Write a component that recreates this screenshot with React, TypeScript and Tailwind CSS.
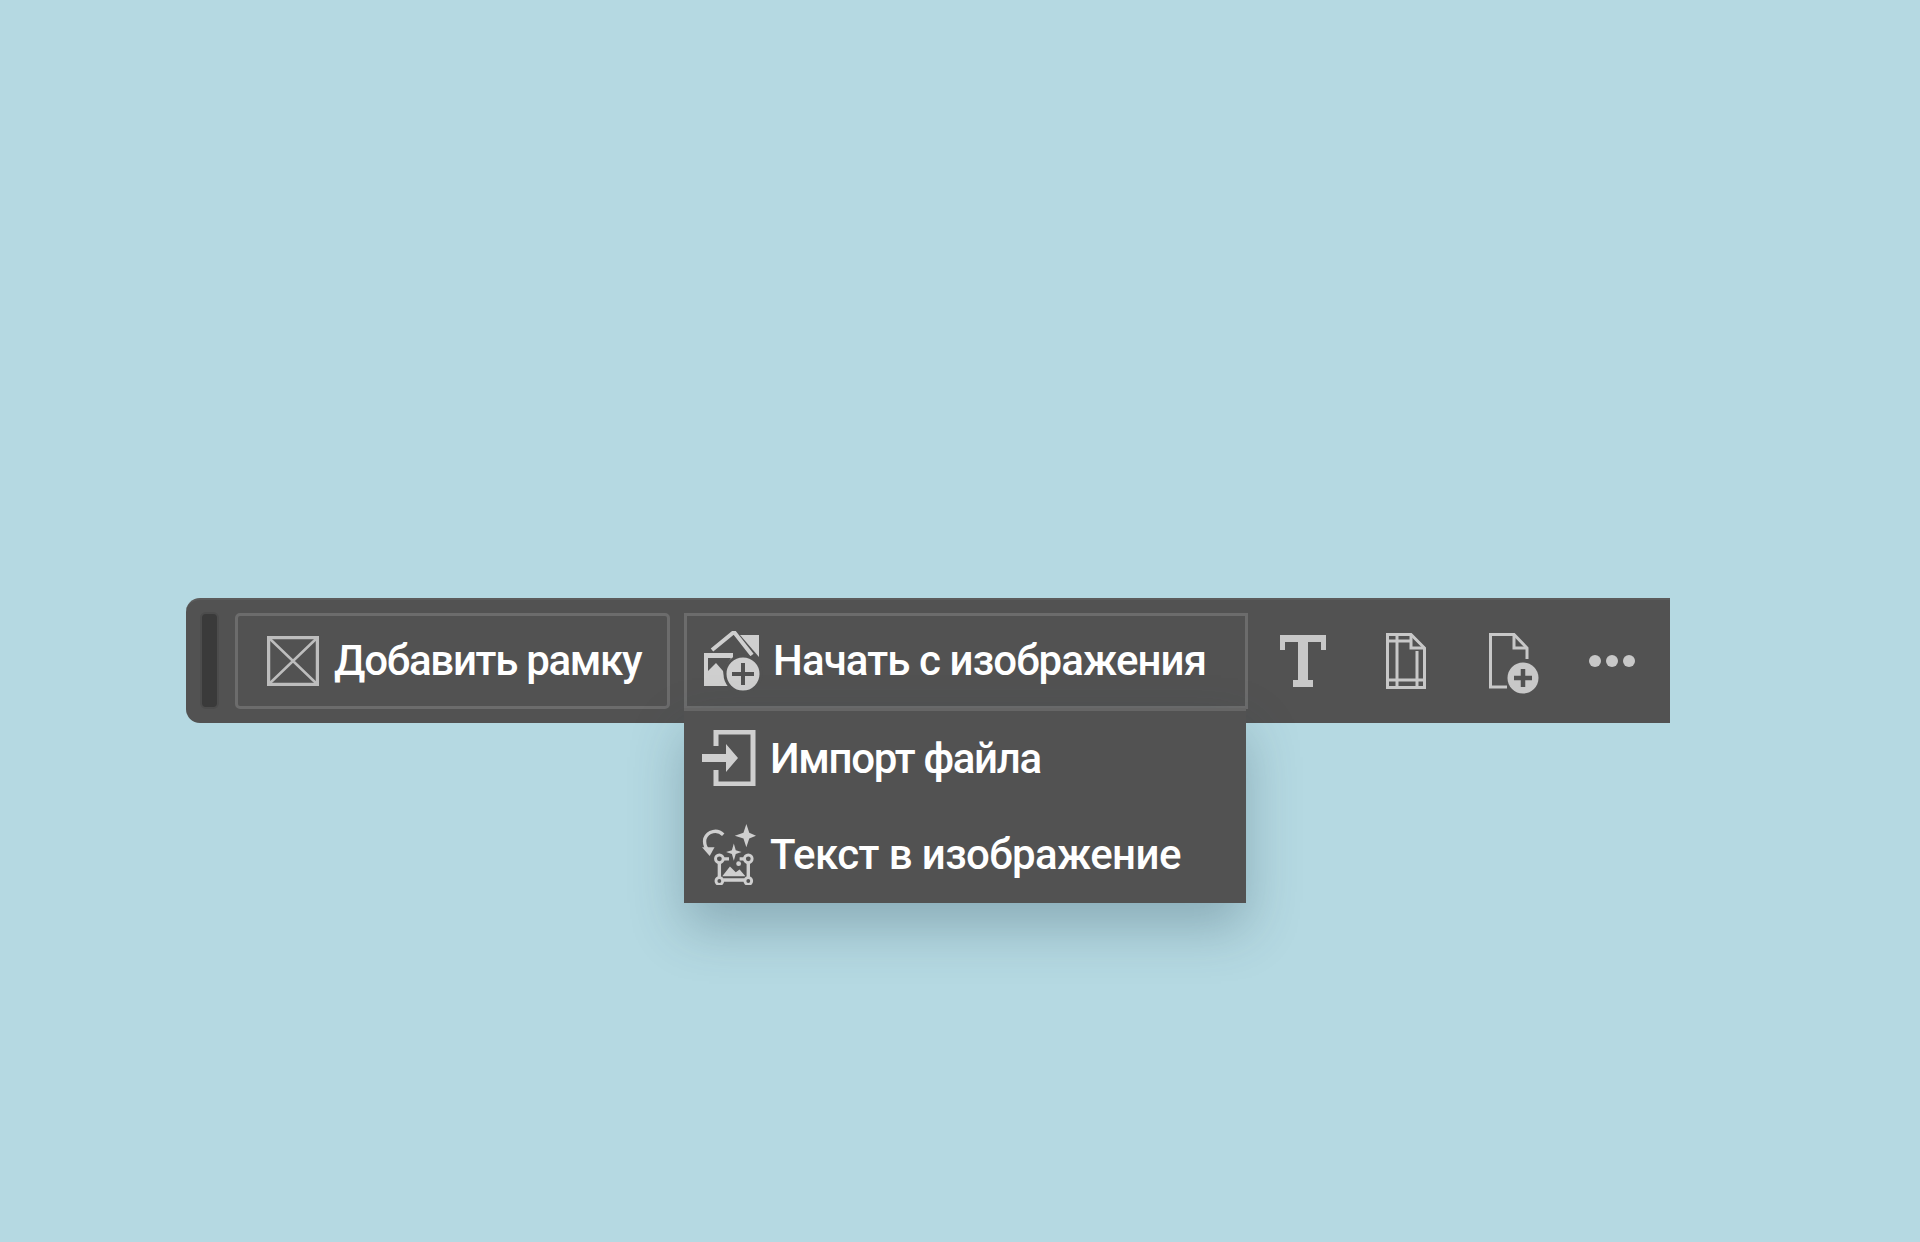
const fontClass = "font-['Roboto','Liberation_Sans',Arial,sans-serif]";

function FrameIcon() {
  return (
    <svg width="52" height="50" viewBox="0 0 52 50" fill="none" stroke="#bdbdbd">
      <rect x="1.5" y="1.5" width="49" height="47" strokeWidth="3.5" />
      <path d="M2 2 50 48M50 2 2 48" strokeWidth="2.5" />
    </svg>
  );
}

function StartImageIcon() {
  return (
    <svg width="60" height="60" viewBox="0 0 60 60" fill="none">
      <path d="M9 19 31 1 49 24" stroke="#cfcfcf" strokeWidth="4" />
      <path d="M37 4H56V26Z" fill="#cfcfcf" />
      <rect x="1" y="22" width="29" height="33" fill="#cfcfcf" />
      <path d="M5 27V40L13 32 20 40 21 44 24 33 28 27Z" fill="#525252" />
      <circle cx="40" cy="43" r="18" fill="#cfcfcf" stroke="#525252" strokeWidth="3" />
      <path d="M40 32V54M29 43H51" stroke="#525252" strokeWidth="4" />
    </svg>
  );
}

function TextIcon() {
  return (
    <svg width="46" height="52" viewBox="0 0 46 52" fill="#c8c8c8">
      <path d="M0 0H46V15H41V7H28V45H33V52H13V45H18V7H5V15H0Z" />
    </svg>
  );
}

function PageIcon() {
  return (
    <svg width="40" height="56" viewBox="0 0 40 56" fill="none" stroke="#c8c8c8" strokeWidth="3">
      <path d="M1.5 1.5H25L38.5 15V54.5H1.5Z" />
      <path d="M25 1.5V15H38.5" />
      <path d="M11 1.5V54.5M1.5 8H25M1.5 47H38.5M31 18V54.5" />
    </svg>
  );
}

function NewPageIcon() {
  return (
    <svg width="50" height="62" viewBox="0 0 50 62" fill="none">
      <path d="M18 54H1.5V1.5H25L38 15V26" stroke="#c8c8c8" strokeWidth="3" />
      <path d="M25 1.5V15H38" stroke="#c8c8c8" strokeWidth="3" />
      <circle cx="34" cy="45" r="15.5" fill="#c8c8c8" />
      <path d="M34 36V54M25 45H43" stroke="#525252" strokeWidth="4.5" />
    </svg>
  );
}

function ImportIcon() {
  return (
    <svg width="54" height="56" viewBox="0 0 54 56" fill="none">
      <path d="M14 16V2H51V54H14V40" stroke="#cfcfcf" strokeWidth="5" />
      <path d="M0 24H24V14L36 28 24 42V32H0Z" fill="#cfcfcf" />
    </svg>
  );
}

function TextToImageIcon() {
  return (
    <svg width="54" height="62" viewBox="0 0 56 62" fill="none" stroke="#cfcfcf">
      <path d="M46 0 49 9 56 12 49 15 46 24 43 15 34 12 43 9Z" fill="#cfcfcf" stroke="none" />
      <path d="M33 20 35 27 41 29 35 31 33 38 31 31 25 29 31 27Z" fill="#cfcfcf" stroke="none" />
      <path d="M22 11C16 5 6 7 3 15 2 20 4 25 7 28" strokeWidth="3.5" />
      <path d="M0 24 13 24 8 33Z" fill="#cfcfcf" stroke="none" />
      <path d="M21 36H28M39 36H45M18 40V55M48 40V55M22 58H44" strokeWidth="3.5" />
      <circle cx="18" cy="36" r="4" strokeWidth="3" />
      <circle cx="48" cy="36" r="4" strokeWidth="3" />
      <circle cx="18" cy="59" r="3.5" strokeWidth="3" />
      <circle cx="48" cy="59" r="3.5" strokeWidth="3" />
      <path d="M21 54 29 44 35 50 39 47 45 54Z" fill="#cfcfcf" stroke="none" />
      <circle cx="38" cy="41" r="2.5" fill="#cfcfcf" stroke="none" />
    </svg>
  );
}

export default function App() {
  return (
    <div className={`min-h-[1242px] bg-[#b5d9e2] pt-[598px] pl-[186px] ${fontClass}`}>
      <div className="flex h-[125px] w-[1484px] items-center rounded-l-[14px] border-t-2 border-[#5c5c5c] bg-[#525252] pb-[2px] pl-[14px]">
        <div className="h-[97px] w-[19px] rounded-[6px] border-2 border-[#4c4c4c] bg-[#3a3a3a]" />
        <button className="ml-[16px] flex h-[96px] w-[435px] items-center rounded-[5px] border-[3px] border-[#6c6c6c] pl-[29px] text-[42px] font-medium tracking-[-1.3px] text-white">
          <FrameIcon />
          <span className="ml-[15px] whitespace-nowrap">Добавить рамку</span>
        </button>
        <div className="relative ml-[14px]">
          <button className="flex h-[96px] w-[564px] items-center border-[3px] border-[#6c6c6c] pl-[16px] text-[42px] font-medium tracking-[-0.9px] text-white">
            <StartImageIcon />
            <span className="ml-[10px] whitespace-nowrap">Начать с изображения</span>
          </button>
          <div className="absolute left-0 top-[95px] w-[562px] border-t-[3px] border-[#666666] bg-[#525252] shadow-[0_24px_50px_rgba(40,70,85,0.3)]">
            <div className="flex h-[95px] items-center pl-[18px] text-[42px] font-medium tracking-[-1.3px] text-white">
              <ImportIcon />
              <span className="ml-[14px] whitespace-nowrap">Импорт файла</span>
            </div>
            <div className="flex h-[97px] items-center pl-[18px] text-[42px] font-medium tracking-[-0.6px] text-white">
              <TextToImageIcon />
              <span className="ml-[14px] whitespace-nowrap">Текст в изображение</span>
            </div>
          </div>
        </div>
        <div className="ml-[32px] flex items-center">
          <TextIcon />
          <div className="ml-[60px]"><PageIcon /></div>
          <div className="ml-[63px] pt-[6px]"><NewPageIcon /></div>
          <div className="ml-[50px] flex gap-[5px]">
            <span className="h-[12px] w-[12px] rounded-full bg-[#c8c8c8]" />
            <span className="h-[12px] w-[12px] rounded-full bg-[#c8c8c8]" />
            <span className="h-[12px] w-[12px] rounded-full bg-[#c8c8c8]" />
          </div>
        </div>
      </div>
    </div>
  );
}
